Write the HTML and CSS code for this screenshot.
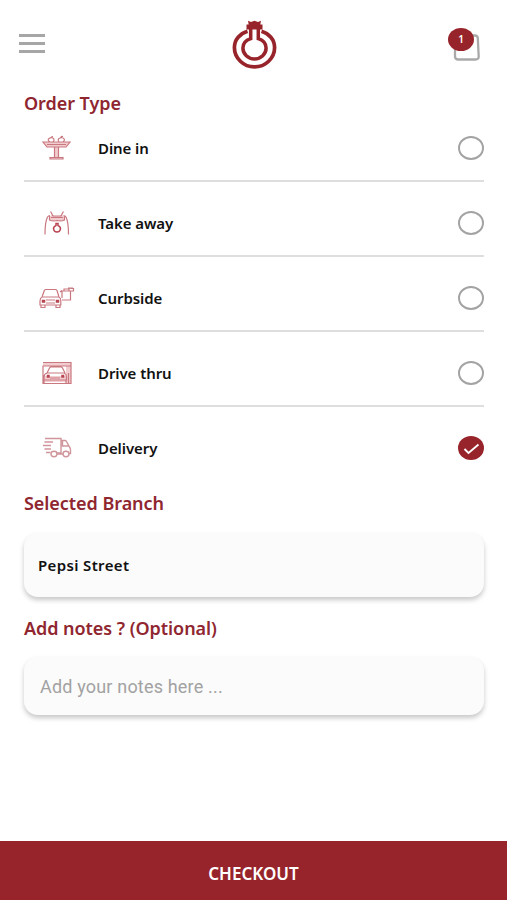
FILE: index.html
```html
<!DOCTYPE html>
<html lang="en">
<head>
<meta charset="utf-8">
<meta name="viewport" content="width=device-width, initial-scale=1">
<title>Order Type</title>
<link rel="stylesheet" href="styles.css">
</head>
<body>
<div class="screen">
  <header class="topbar">
    <button class="menu" aria-label="Menu"><span></span><span></span><span></span></button>
    <svg class="logo" width="46" height="50" viewBox="0 0 46 50" fill="none" stroke="#98242b">
      <path stroke-width="3.700" d="M15.500 11.200C8 13.500 2.400 19.500 2.400 27.500C2.400 38.200 11.500 46.900 22.500 46.900S42.600 38.200 42.600 27.500C42.600 19.500 37 13.500 29.500 11.200"/>
      <path stroke-width="3.500" d="M18.700 8V18.600C14.300 20 10.900 23.500 10.900 28C10.900 34 16 38.900 22.500 38.900S34.100 34 34.100 28C34.100 23.500 30.700 20 26.300 18.600V8"/>
      <path fill="#98242b" stroke="none" d="M16 .8L19 2L22.500 .8L26 2L29 .8L28.300 4.500H30.500V9.500H14.500V4.500H16.700Z"/>
    </svg>
    <div class="cart">
      <svg width="32" height="36" viewBox="0 0 32 36" fill="none" stroke="#a9a9a9" stroke-width="2.300">
        <path d="M6 10V29.500Q6 32.500 9.500 32.500H26.500Q29.800 32.500 29.700 29.500L28.800 11Q28.500 8.500 26 8.500H9"/>
      </svg>
      <span class="count">1</span>
    </div>
  </header>

  <main class="content">
    <h2 class="heading">Order Type</h2>
    <ul class="options">
      <li class="option">
        <svg class="icon" viewBox="0 0 40 36">
          <path class="tint" d="M5 12H32L28 17H9ZM16 17H21V27H16ZM12 27H25V29H12Z"/>
          <path d="M5 12H32L28 17H9ZM16.500 17V27M20.500 17V27M12 27.500H25V29H12ZM12 12Q9 10 11 8.500Q14 6.500 16 9Q16 11 15 12M21 12Q19 9 22 8Q26 7 26.500 10L25 12M13 8Q13 6.500 15 6.500M23 7.500Q23 6 25 6.500M9 14.500H28"/>
        </svg>
        <span class="label">Dine in</span>
        <span class="radio"></span>
      </li>
      <li class="option">
        <svg class="icon" viewBox="0 0 40 36">
          <path class="tint" d="M11 11H26V15H11Z"/>
          <path d="M7 29.500Q7 17 9.500 12Q10.500 10.500 12 10.500M30.500 29.500Q30.500 17 28 12Q27 10.500 25.500 10.500M12.500 6.500L14 9Q14 11 16 11H22Q24 11 24 9L25.500 6.500M11.500 10.500V15Q15 16.500 19 15.500Q23 16.500 26.500 15V10.500M13 12.500H25"/>
          <path class="strong" d="M18 18.500H20V20.500Q22.500 21.500 22.500 24Q22 27 19 27T15.500 24Q15.500 21.500 18 20.500Z"/>
        </svg>
        <span class="label">Take away</span>
        <span class="radio"></span>
      </li>
      <li class="option">
        <svg class="icon" viewBox="0 0 40 36">
          <path d="M4 17L6.300 10.500Q6.800 9.500 8 9.500H17Q18.500 9.500 19 10.500L21 17M4 17H21Q22.800 18 22.800 21V25H2V21Q2 18 4 17ZM8 23H17M8 20H17M3 25V27.500H7V25M18 25V27.500H22V25M22 12L24 10.500M24 11H32.500V20H24M26 11V9H31V11M24 11V18M32.500 8.500H35.500V11H32.500M30 8.200H35"/>
          <path class="strong" d="M4.500 20.500H6.500V22H4.500ZM18.500 20.500H20.500V22H18.500Z"/>
        </svg>
        <span class="label">Curbside</span>
        <span class="radio"></span>
      </li>
      <li class="option">
        <svg class="icon" viewBox="0 0 40 36">
          <path class="tint" d="M5 7H33V11H5ZM28 11H33V28.500H28ZM6 21H28V27H6Z"/>
          <path d="M5 7.500H33V28.500H5V11H33M9 18L11.500 13Q12 12 13 12H23Q24 12 24.500 13L27 18M9 18H26Q28.500 19 28.500 22V25H6V22Q6 19 9 18ZM12 23H22M6 25V28M28 25V28M30.500 18V28"/>
          <path class="strong" d="M9.500 20.500H11V22H9.500ZM24 20.500H25.500V22H24Z"/>
        </svg>
        <span class="label">Drive thru</span>
        <span class="radio"></span>
      </li>
      <li class="option">
        <svg class="icon soft" viewBox="0 0 40 36">
          <path d="M7 8.500H23V23H19M23 10.500H27Q28 10.500 28.500 11.500L31.500 17Q32.500 18 32.500 20V23.500H31M24.500 11V16H31M25 24H19.500M6.500 12H15M5 15.500H13M6.500 19H13M8 22.500H12.500"/>
          <ellipse cx="16" cy="24" rx="3" ry="2.700"/><ellipse cx="28" cy="24" rx="3" ry="2.700"/>
        </svg>
        <span class="label">Delivery</span>
        <span class="radio checked"><svg width="26" height="24" viewBox="0 0 26 24" fill="none" stroke="#fff" stroke-width="1.800"><path d="M6.500 13L10.500 17L20.500 8.500"/></svg></span>
      </li>
    </ul>
    <h2 class="heading branch-heading">Selected Branch</h2>
    <div class="card branch">Pepsi Street</div>
    <h2 class="heading notes-heading">Add notes ? (Optional)</h2>
    <div class="card notes">Add your notes here ...</div>
  </main>

  <footer class="checkout">CHECKOUT</footer>
</div>
</body>
</html>
```
FILE: styles.css
```css
* { box-sizing: border-box; }
body { margin: 0; background: #fff; font-family: "Noto Sans", sans-serif; color: #111; }
.screen { display: flex; flex-direction: column; height: 900px; }
.topbar { display: flex; justify-content: space-between; align-items: flex-start; height: 90px; padding: 20px 26px 0 19px; }
.menu { display: flex; flex-direction: column; gap: 5px; width: 26px; padding: 0; border: 0; background: none; margin-top: 14px; }
.menu span { height: 3px; background: #a6a6a6; }
.logo { margin-left: 15px; }
.cart { position: relative; width: 32px; height: 36px; margin-top: 7px; }
.cart svg { display: block; }
.count { position: absolute; left: -1px; top: 1px; width: 26px; height: 23px; border-radius: 50%; background: #98242b; color: #fff; font-size: 10px; font-weight: 600; line-height: 23px; text-align: center; }
.content { flex: 1; padding: 0 23px 0 24px; }
.heading { margin: 0; height: 25px; line-height: 26px; font-size: 18px; font-weight: 600; letter-spacing: -.05px; color: #8f2630; white-space: nowrap; }
.options { list-style: none; margin: 0; padding: 0; display: flex; flex-direction: column; gap: 8px; }
.option { display: flex; align-items: center; height: 67px; border-bottom: 2px solid #dedede; }
.option:last-child { border-bottom-color: transparent; }
.icon { width: 40px; height: 36px; margin-left: 14px; fill: none; stroke: #c97880; stroke-width: 1.2; }
.icon .tint { fill: #f2cdd0; stroke: none; }
.icon .strong { stroke: #b94450; stroke-width: 1.5; }
.icon.soft { stroke: #cf959b; stroke-width: 1.4; }
.label { flex: 1; margin-left: 20px; font-size: 15px; font-weight: 600; letter-spacing: -.08px; }
.radio { width: 26px; height: 24px; border: 2px solid #a3a3a3; border-radius: 50%; }
.radio.checked { border: 0; background: #98242b; }
.radio svg { display: block; }
.branch-heading { margin-top: 8px; }
.card { display: flex; align-items: center; border-radius: 14px; background: #fbfbfb; box-shadow: 0 3px 5px rgba(0, 0, 0, .22); }
.branch { height: 64px; margin-top: 18px; padding-left: 14px; font-size: 15px; font-weight: 600; letter-spacing: .35px; }
.notes-heading { margin-top: 18px; }
.notes { height: 58px; margin-top: 17px; padding-left: 16px; font-family: Roboto, sans-serif; font-size: 18px; letter-spacing: .18px; color: #a2a2a2; }
.checkout { display: flex; align-items: center; justify-content: center; height: 59px; padding-top: 5px; background: #98242b; color: #fff; font-size: 17px; font-weight: 600; }
```
